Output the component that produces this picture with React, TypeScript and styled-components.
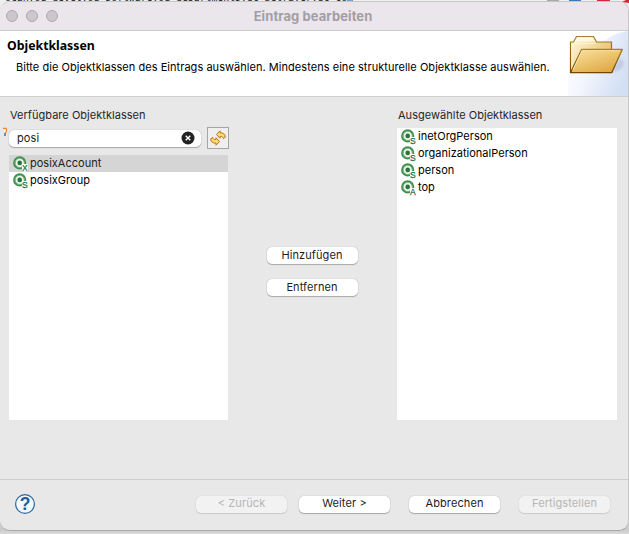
import React from "react";
import styled, { createGlobalStyle, css } from "styled-components";

const GlobalStyle = createGlobalStyle`
  * { box-sizing: border-box; }
  html, body { margin: 0; padding: 0; }
  body {
    font-family: Inter, "Liberation Sans", sans-serif;
    font-size: 11px;
    color: #1c1c1c;
    overflow: hidden;
  }
`;

const Desktop = styled.div`
  width: 629px;
  height: 534px;
  display: flex;
  flex-direction: column;
  overflow: hidden;
  background: linear-gradient(#eeeeee 0 400px, #cbcbcb 530px, #dadada 534px);
`;

const EditorStrip = styled.div`
  display: flex;
  justify-content: space-between;
  height: 1px;
  flex: none;
  padding-left: 5px;
  background: #f0f0f0;
`;

const EditorText = styled.div`
  height: 2px;
  overflow: hidden;
  font: 9.8px/12px "DejaVu Sans Mono", monospace;
  letter-spacing: 0;
  white-space: pre;
  color: #111;

  span { display: block; margin-top: -8px; }
`;

const ToolbarMarks = styled.svg`
  display: block;
  flex: none;
`;

const Dialog = styled.main`
  position: relative;
  display: flex;
  flex-direction: column;
  width: 629px;
  height: 530px;
  flex: none;
  border: 1px solid #c6c6c6;
  border-left: 0;
  border-bottom-color: #aaa;
  border-radius: 10px;
  background: #e8e8e8;
  overflow: hidden;
`;

const TitleBar = styled.header`
  display: grid;
  grid-template-columns: 62px 1fr 64px;
  align-items: center;
  height: 29px;
  flex: none;
  border-bottom: 1px solid #cfcccf;
  background: #ebe6eb;
`;

const TrafficLights = styled.div`
  display: flex;
  gap: 8px;
  padding-left: 6px;
`;

const Light = styled.span`
  width: 12px;
  height: 12px;
  border: 1px solid #aea8ae;
  border-radius: 50%;
  background: #cdc7cd;
`;

const WindowTitle = styled.h1`
  margin: 0;
  text-align: center;
  font-size: 13px;
  line-height: 16px;
  font-weight: 700;
  letter-spacing: 0.08px;
  color: #a39ea3;
`;

const Banner = styled.section`
  display: flex;
  justify-content: space-between;
  height: 66px;
  flex: none;
  border-bottom: 1px solid #cfcfcf;
  background: #fff;
`;

const BannerText = styled.div`
  padding: 6px 0 0 7px;
  white-space: nowrap;
`;

const Heading = styled.h2`
  margin: 0;
  font: 700 12.3px/18px "Noto Sans", sans-serif;
  color: #000;
`;

const Description = styled.p`
  margin: 4px 0 0 9px;
  line-height: 16px;
  letter-spacing: 0.042px;
  color: #000;
`;

const Body = styled.section`
  display: grid;
  grid-template-columns: 220px 168px 220px;
  height: 382px;
  flex: none;
  padding: 10px 0 59px 9px;
`;

const Column = styled.div`
  display: flex;
  flex-direction: column;
  min-height: 0;
`;

const Label = styled.label`
  height: 20px;
  flex: none;
  padding-left: 1px;
  line-height: 16px;
  letter-spacing: 0.03px;
  color: #262626;
`;

const FilterRow = styled.div`
  position: relative;
  display: flex;
  justify-content: space-between;
  align-items: center;
  height: 22px;
  flex: none;
  margin-bottom: 5px;
`;

const AssistMark = styled.svg`
  position: absolute;
  left: -7px;
  top: 0;
`;

const SearchField = styled.div`
  display: flex;
  align-items: center;
  justify-content: space-between;
  width: 192px;
  height: 17px;
  padding: 0 6px 0 8px;
  border-radius: 5px;
  background: #fff;
  box-shadow: 0 0 1px #999, 0 1px 1px #aaa;
  line-height: 16px;
  letter-spacing: 0.1px;
`;

const RefreshButton = styled.button`
  width: 22px;
  height: 22px;
  padding: 0;
  border: 1px solid #a5a5a5;
  background: #efefef;

  svg { display: block; margin: 2px; }
`;

const List = styled.ul`
  flex: 1;
  margin: 1px 0 0;
  padding: 0;
  list-style: none;
  background: #fff;
`;

const ListItem = styled.li<{ $selected?: boolean }>`
  display: flex;
  align-items: center;
  height: 17px;
  gap: 1px;
  padding-left: 4px;
  letter-spacing: 0.01px;
  line-height: 17px;
  color: #000;
  ${(p) => p.$selected && css`background: #d5d5d5; color: #222;`}
`;

const FilteredColumn = styled(Column)`
  ${List} { margin-right: 1px; }
`;

const Transfer = styled.div`
  display: flex;
  flex-direction: column;
  align-items: center;
  gap: 15px;
  padding: 140px 2px 0 0;
`;

const Button = styled.button`
  width: 91px;
  height: 17px;
  flex: none;
  padding: 0 0 1px;
  border: 0;
  border-radius: 5px;
  background: #fff;
  box-shadow: 0 0 1px #999, 0 1px 1px #aaa;
  font: inherit;
  line-height: 15px;
  letter-spacing: 0.1px;
  color: #1c1c1c;

  &:disabled {
    background: #f2f2f2;
    color: #b5b5b5;
    box-shadow: 0 0 1px #bbb, 0 1px 1px #ccc;
  }
`;

const Footer = styled.footer`
  display: flex;
  align-items: center;
  flex: 1;
  padding: 0 18px 2px 14px;
  border-top: 1px solid #cecece;
`;

const FooterButtons = styled.div`
  display: grid;
  grid-template-columns: 103px 110px 110px 91px;
  margin-left: auto;
`;

const FolderArt = () => (
  <svg width="60" height="65" viewBox="0 0 60 65" aria-hidden="true">
    <defs>
      <linearGradient id="sky" x1="0" y1="0.2" x2="1" y2=".6">
        <stop offset="0" stopColor="#ffffff" />
        <stop offset=".4" stopColor="#f3f6fd" />
        <stop offset="1" stopColor="#d3dff4" />
      </linearGradient>
      <linearGradient id="back" x1="0" y1="0" x2="1" y2=".6">
        <stop offset="0" stopColor="#fffbe4" />
        <stop offset="1" stopColor="#e9bd62" />
      </linearGradient>
      <linearGradient id="front" x1="0" y1="0" x2=".7" y2="1">
        <stop offset="0" stopColor="#fae4a3" />
        <stop offset="1" stopColor="#dfa842" />
      </linearGradient>
      <linearGradient id="edge" x1="0" y1="0" x2="0" y2="1">
        <stop offset="0" stopColor="#a78131" />
        <stop offset="1" stopColor="#744500" />
      </linearGradient>
      <filter id="soft"><feGaussianBlur stdDeviation="1.5" /></filter>
    </defs>
    <path d="M0 65V43C22 25 35 3 60 0V65Z" fill="url(#sky)" />
    <path d="M43 42 53 27Q59 33 51 39Z" fill="#9b9fc0" opacity=".4" filter="url(#soft)" />
    <path d="M2.500 41.500V11H5.500L8.500 5.500H25.500L28.500 11H43.500V41.500Z" fill="url(#back)" stroke="url(#edge)" strokeWidth="1.2" />
    <path d="M6.500 10.500 9.500 6.500H24.500L27.500 10.500" fill="#fffdf0" opacity=".8" />
    <path d="M4 39V12.500H27" fill="none" stroke="#fff6ca" />
    <path d="M2.500 41.700 13.500 18.500H54.300L43.700 41.700Z" fill="url(#front)" stroke="url(#edge)" strokeWidth="1.3" strokeLinejoin="round" />
    <path d="m4.800 39 9.300-19.300H52" fill="none" stroke="#ffe9b1" strokeWidth=".8" />
  </svg>
);

const ClassIcon = ({ kind }: { kind: string }) => (
  <svg width="16" height="16" viewBox="0 0 16 16" aria-hidden="true">
    <circle cx="6.7" cy="6.900" r="5.5" fill="#eaf5e9" stroke="#3f8d50" strokeWidth="2.2" />
    <circle cx="6.7" cy="6.900" r="4.7" fill="none" stroke="#79b57c" strokeWidth="1" />
    <circle cx="6.7" cy="6.900" r="2.3" fill="#26753c" />
    <path d="M9 8h6v7.5H9Z" fill="#fff" />
    <text x="11.9" y="14.700" textAnchor="middle" fontFamily="Liberation Sans" fontSize="8.5" fill="#18713b" stroke="#18713b" strokeWidth=".25">{kind}</text>
  </svg>
);

const ClearIcon = () => (
  <svg width="14" height="14" viewBox="0 0 14 14" aria-hidden="true">
    <circle cx="7" cy="7" r="6.5" fill="#222" />
    <path d="m4.7 4.7 4.6 4.6m0-4.6L4.7 9.3" stroke="#fff" strokeWidth="1.4" />
  </svg>
);

const RefreshIcon = () => (
  <svg width="16" height="16" viewBox="0 0 16 16" aria-hidden="true">
    <g fill="#ffdc70" stroke="#b8741b" strokeWidth="1" strokeLinejoin="round">
      <path d="M6.5 4.5 10 .8V2.800C13 2.600 15.500 4.400 15.300 7.200L13.200 8.500C13 6.900 11.900 6.200 10 6.400V8.300Z" />
      <path d="M9.500 11.500 6 15.200V13.200C3 13.400 .5 11.600 .7 8.800L2.800 7.500C3 9.100 4.100 9.800 6 9.600V7.700Z" />
    </g>
  </svg>
);

const HelpIcon = () => (
  <svg width="22" height="22" viewBox="0 0 22 22" aria-hidden="true">
    <circle cx="11" cy="11" r="9.4" fill="#f3f8fc" stroke="#2d659a" strokeWidth="1.2" />
    <text x="11" y="17" textAnchor="middle" fontFamily="Liberation Sans" fontSize="17.5" fontWeight="700" fill="#1f5f99">?</text>
  </svg>
);

const available = [
  { name: "posixAccount", kind: "X", selected: true },
  { name: "posixGroup", kind: "S" },
];

const chosen = [
  { name: "inetOrgPerson", kind: "S" },
  { name: "organizationalPerson", kind: "S" },
  { name: "person", kind: "S" },
  { name: "top", kind: "A" },
];

type ObjectClass = { name: string; kind: string; selected?: boolean };

const ClassList = ({ items }: { items: ObjectClass[] }) => (
  <List>
    {items.map((item) => (
      <ListItem key={item.name} $selected={item.selected}>
        <ClassIcon kind={item.kind} />
        {item.name}
      </ListItem>
    ))}
  </List>
);

export default function App() {
  return (
    <>
      <GlobalStyle />
      <Desktop>
        <EditorStrip>
          <EditorText><span>ocan,ou=devel,ou=software,ou=departments,dc=betrayer,dc=com</span></EditorText>
          <ToolbarMarks width="82" height="3" viewBox="0 0 82 3" aria-hidden="true">
            <path d="M0 0h12v1H0z" fill="#aaa" />
            <path d="M22 0h12v1H22z" fill="#3d79b5" />
            <path d="M50 0h13v2H50z" fill="#d02836" />
            <path d="m75 2 4-2h3v3z" fill="#dd2038" />
          </ToolbarMarks>
        </EditorStrip>
        <Dialog>
          <TitleBar>
            <TrafficLights><Light /><Light /><Light /></TrafficLights>
            <WindowTitle>Eintrag bearbeiten</WindowTitle>
          </TitleBar>
          <Banner>
            <BannerText>
              <Heading>Objektklassen</Heading>
              <Description>Bitte die Objektklassen des Eintrags auswählen. Mindestens eine strukturelle Objektklasse auswählen.</Description>
            </BannerText>
            <FolderArt />
          </Banner>
          <Body>
            <FilteredColumn>
              <Label>Verfügbare Objektklassen</Label>
              <FilterRow>
                <AssistMark width="7" height="10" viewBox="0 0 7 10" aria-hidden="true">
                  <path d="M1 1.500h3q1.500 2-1 5" fill="#fff" stroke="#e58a3b" strokeWidth="1.3" />
                  <path d="M2 6h2v3H2z" fill="#718ba3" />
                </AssistMark>
                <SearchField>posi<ClearIcon /></SearchField>
                <RefreshButton><RefreshIcon /></RefreshButton>
              </FilterRow>
              <ClassList items={available} />
            </FilteredColumn>
            <Transfer>
              <Button>Hinzufügen</Button>
              <Button>Entfernen</Button>
            </Transfer>
            <Column>
              <Label>Ausgewählte Objektklassen</Label>
              <ClassList items={chosen} />
            </Column>
          </Body>
          <Footer>
            <HelpIcon />
            <FooterButtons>
              <Button disabled>&lt; Zurück</Button>
              <Button>Weiter &gt;</Button>
              <Button>Abbrechen</Button>
              <Button disabled>Fertigstellen</Button>
            </FooterButtons>
          </Footer>
        </Dialog>
      </Desktop>
    </>
  );
}
